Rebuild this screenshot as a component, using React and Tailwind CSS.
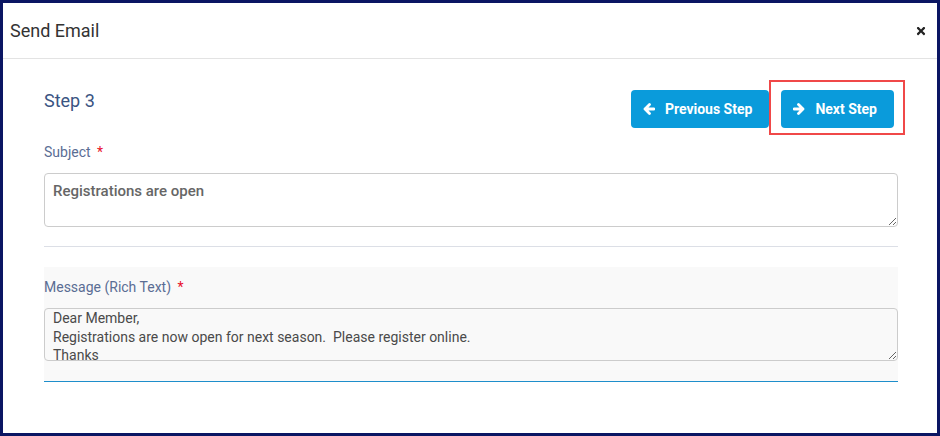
import { FaTimes } from 'react-icons/fa'

const Arrow = ({ dir }) => {
  return (
    <svg width="12" height="12" viewBox="0 0 12 12" className={dir === 'right' ? 'rotate-180' : ''}>
      <path d="M2 6h9M6.5 1.5L2 6l4.5 4.5" fill="none" stroke="currentColor" strokeWidth="2.8" strokeLinecap="round" strokeLinejoin="round" />
    </svg>
  )
}

const StepButton = ({ icon, label }) => {
  return (
    <button className="h-[38px] pl-[12px] pr-[17px] flex items-center gap-[10px] rounded-[4px] bg-[#0a9bdb] text-white text-[14px] font-bold">
      {icon}
      <span>{label}</span>
    </button>
  )
}

const App = () => {
  return (
    <div
      className="w-[940px] h-[436px] border-[3px] border-[#0b1663] bg-white text-[#333]"
      style={{ fontFamily: 'Roboto, "Liberation Sans", sans-serif' }}
    >
      <div className="h-[56px] px-[7px] pr-[11px] flex items-center justify-between border-b border-[#e3e3e3]">
        <span className="text-[18px] text-[#333]">Send Email</span>
        <FaTimes className="text-[#222] w-[10px] h-[12px]" />
      </div>

      <div className="pl-[41px] pr-[39px] pt-[31px]">
        <div className="flex items-start justify-between">
          <h2 className="text-[18px] leading-[22px] text-[#3a5482]">Step 3</h2>
          <div className="flex items-center gap-3 pr-1">
            <StepButton icon={<Arrow dir="left" />} label="Previous Step" />
            <div className="relative">
              <StepButton icon={<Arrow dir="right" />} label="Next Step" />
              <span className="absolute -left-[12px] -top-[10px] -right-[11px] -bottom-[7px] border-2 border-[#f04848] pointer-events-none" />
            </div>
          </div>
        </div>

        <label className="mt-[14px] block text-[14px] leading-[20px] text-[#5a6d94]">
          Subject <span className="ml-[3px] text-[#e8102b]">*</span>
        </label>
        <textarea
          readOnly
          defaultValue="Registrations are open"
          className="mt-[11px] block w-full h-[54px] px-[8px] pt-[7px] border border-[#cccccc] rounded-[4px] text-[15px] leading-[20px] font-medium text-[#666] outline-none"
        />

        <div className="mt-[19px] border-b border-[#dcdfe6]" />

        <div className="mt-[20px] bg-[#f9f9f9] pt-[10px] pb-[20px] border-b border-[#1e8ecb]">
          <label className="block text-[14px] leading-[20px] text-[#5a6d94]">
            Message (Rich Text) <span className="ml-[3px] text-[#e8102b]">*</span>
          </label>
          <textarea
            readOnly
            defaultValue={'Dear Member,\nRegistrations are now open for next season.  Please register online.\nThanks'}
            className="mt-[11px] block w-full h-[53px] px-[8px] pt-0 border border-[#cccccc] rounded-[4px] bg-[#f9f9f9] text-[14px] leading-[18.5px] text-[#4a4a4a] outline-none overflow-hidden"
          />
        </div>
      </div>
    </div>
  )
}

export default App
